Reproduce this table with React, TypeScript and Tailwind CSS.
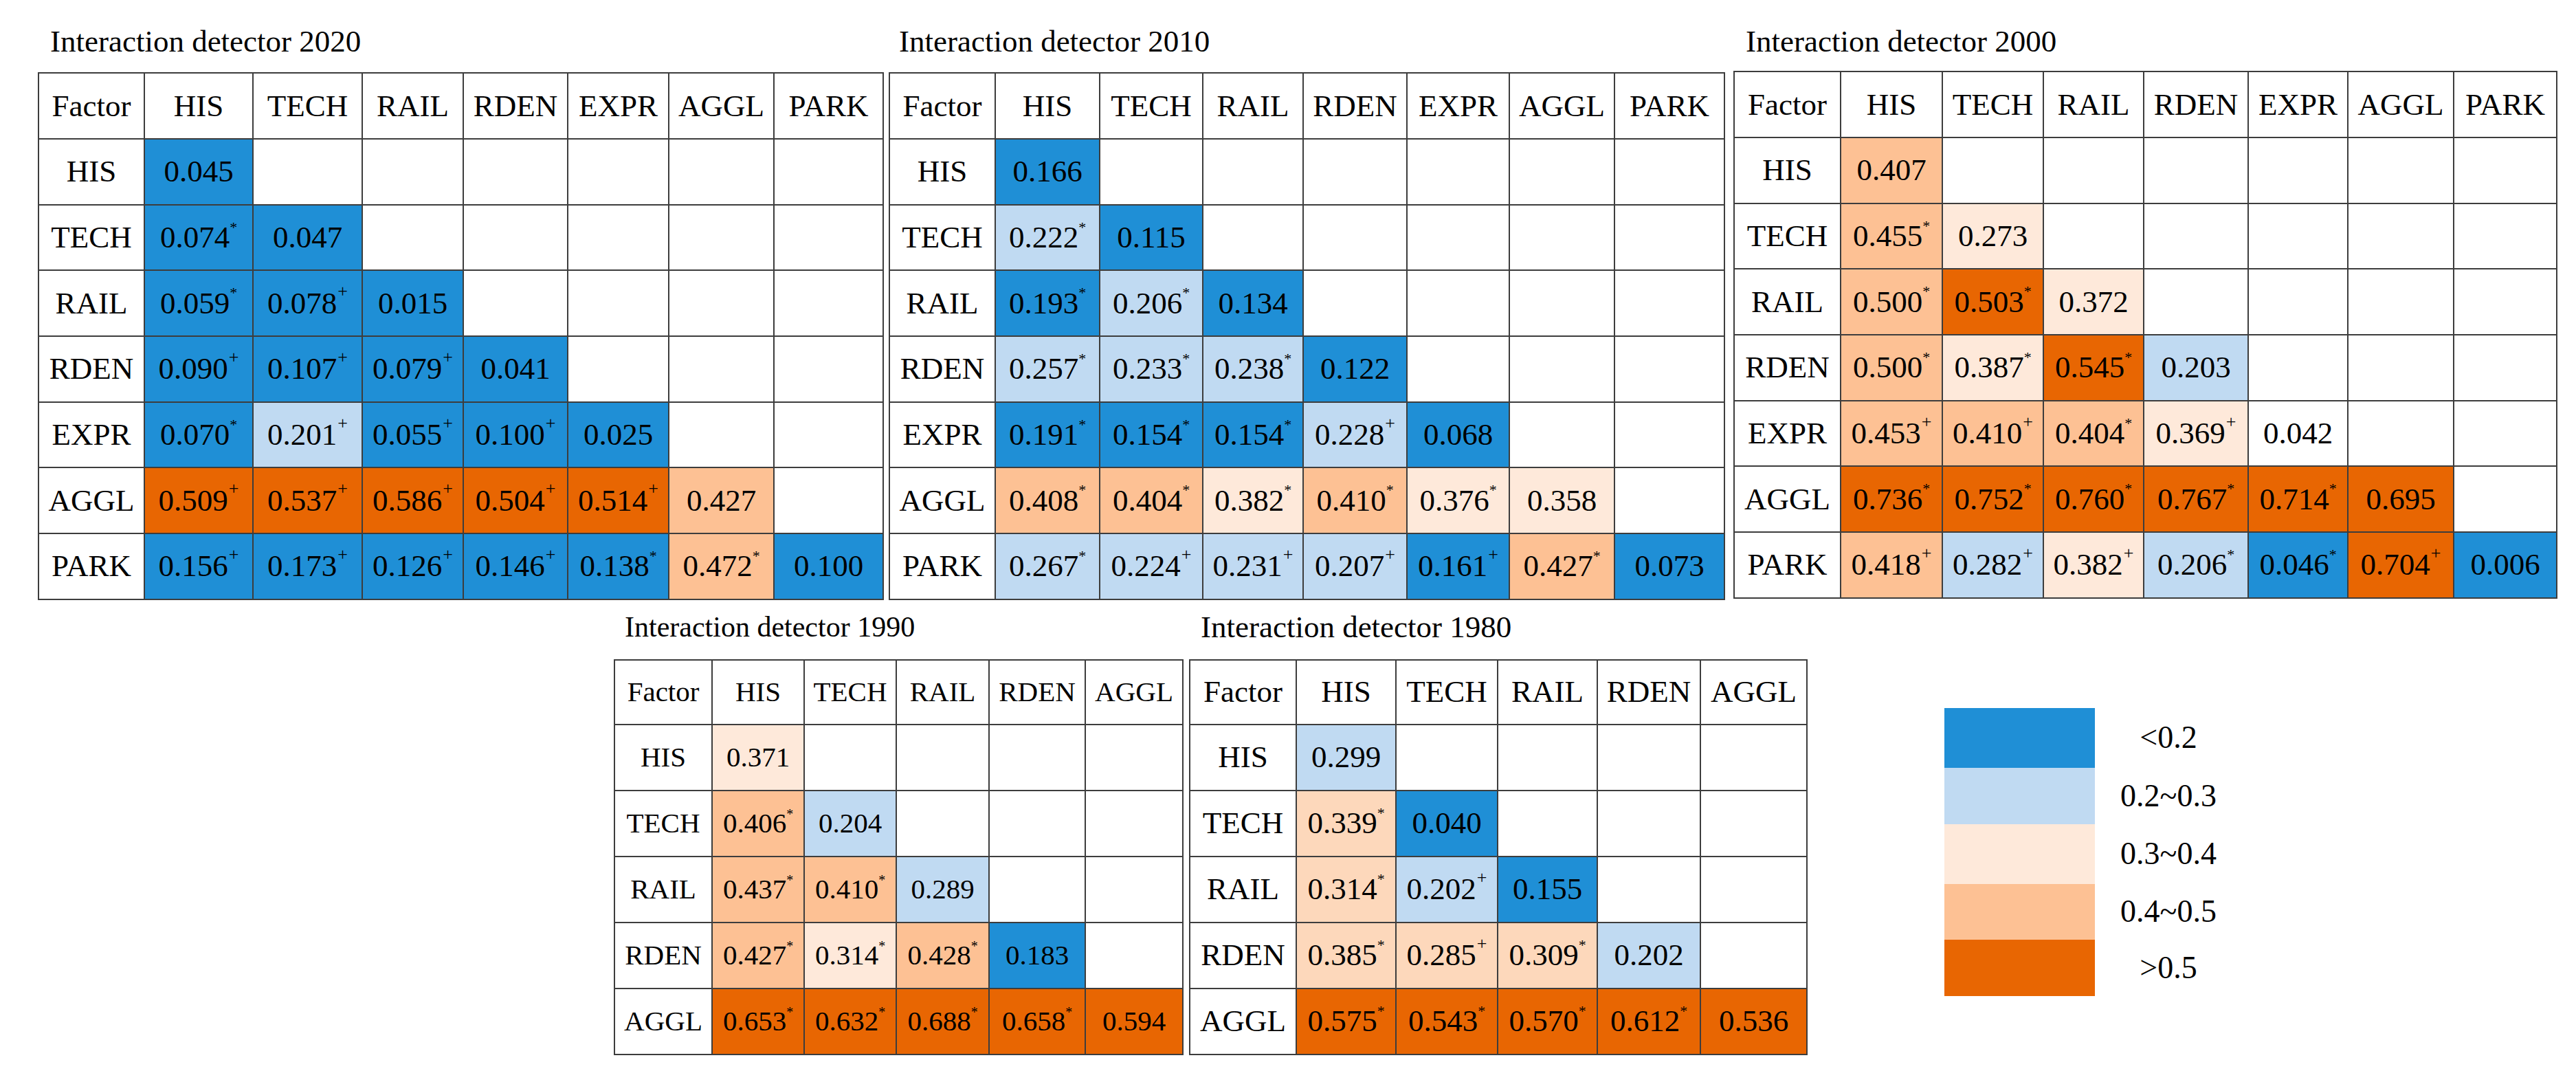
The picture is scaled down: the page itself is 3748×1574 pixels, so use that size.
import React from "react";

type Fill = "B1" | "B2" | "P1" | "P2" | "P3" | "O" | "W";
type Cell = [string, string, Fill]; // value, superscript, fill

const FILL: Record<Fill, string> = {
  B1: "bg-[#1f8fd6]",
  B2: "bg-[#c0daf2]",
  P1: "bg-[#fee9da]",
  P2: "bg-[#fdc194]",
  P3: "bg-[#fdd8bb]",
  O: "bg-[#e86602]",
  W: "bg-white",
};

type TableDef = {
  title: string;
  cols: string[];
  rows: { label: string; cells: Cell[] }[];
  grid: string;
  rowsCls: string;
  big: boolean;
  titleCls: string;
  blockCls: string;
  tableMt: string;
};

const T2020: TableDef = {
  title: "Interaction detector 2020",
  cols: ["Factor", "HIS", "TECH", "RAIL", "RDEN", "EXPR", "AGGL", "PARK"],
  grid: "grid-cols-[154px_158px_159px_147px_152px_147px_153px_159px]",
  rowsCls: "grid-rows-[96px_repeat(7,95.7px)]",
  big: true,
  titleCls: "ml-[18px] text-[45px] leading-[45px] h-[45px]",
  blockCls: "",
  tableMt: "mt-[22px]",
  rows: [
    { label: "HIS", cells: [["0.045", "", "B1"]] },
    { label: "TECH", cells: [["0.074", "*", "B1"], ["0.047", "", "B1"]] },
    { label: "RAIL", cells: [["0.059", "*", "B1"], ["0.078", "+", "B1"], ["0.015", "", "B1"]] },
    { label: "RDEN", cells: [["0.090", "+", "B1"], ["0.107", "+", "B1"], ["0.079", "+", "B1"], ["0.041", "", "B1"]] },
    { label: "EXPR", cells: [["0.070", "*", "B1"], ["0.201", "+", "B2"], ["0.055", "+", "B1"], ["0.100", "+", "B1"], ["0.025", "", "B1"]] },
    { label: "AGGL", cells: [["0.509", "+", "O"], ["0.537", "+", "O"], ["0.586", "+", "O"], ["0.504", "+", "O"], ["0.514", "+", "O"], ["0.427", "", "P2"]] },
    { label: "PARK", cells: [["0.156", "+", "B1"], ["0.173", "+", "B1"], ["0.126", "+", "B1"], ["0.146", "+", "B1"], ["0.138", "*", "B1"], ["0.472", "*", "P2"], ["0.100", "", "B1"]] },
  ],
};

const T2010: TableDef = {
  title: "Interaction detector 2010",
  cols: ["Factor", "HIS", "TECH", "RAIL", "RDEN", "EXPR", "AGGL", "PARK"],
  grid: "grid-cols-[154px_152px_150px_146px_151px_149px_153px_160px]",
  rowsCls: "grid-rows-[96px_repeat(7,95.7px)]",
  big: true,
  titleCls: "ml-[15px] text-[45px] leading-[45px] h-[45px]",
  blockCls: "ml-[7px]",
  tableMt: "mt-[22px]",
  rows: [
    { label: "HIS", cells: [["0.166", "", "B1"]] },
    { label: "TECH", cells: [["0.222", "*", "B2"], ["0.115", "", "B1"]] },
    { label: "RAIL", cells: [["0.193", "*", "B1"], ["0.206", "*", "B2"], ["0.134", "", "B1"]] },
    { label: "RDEN", cells: [["0.257", "*", "B2"], ["0.233", "*", "B2"], ["0.238", "*", "B2"], ["0.122", "", "B1"]] },
    { label: "EXPR", cells: [["0.191", "*", "B1"], ["0.154", "*", "B1"], ["0.154", "*", "B1"], ["0.228", "+", "B2"], ["0.068", "", "B1"]] },
    { label: "AGGL", cells: [["0.408", "*", "P2"], ["0.404", "*", "P2"], ["0.382", "*", "P1"], ["0.410", "*", "P2"], ["0.376", "*", "P1"], ["0.358", "", "P1"]] },
    { label: "PARK", cells: [["0.267", "*", "B2"], ["0.224", "+", "B2"], ["0.231", "+", "B2"], ["0.207", "+", "B2"], ["0.161", "+", "B1"], ["0.427", "*", "P2"], ["0.073", "", "B1"]] },
  ],
};

const T2000: TableDef = {
  title: "Interaction detector 2000",
  cols: ["Factor", "HIS", "TECH", "RAIL", "RDEN", "EXPR", "AGGL", "PARK"],
  grid: "grid-cols-[155px_148px_147px_146px_152px_145px_154px_150px]",
  rowsCls: "grid-rows-[96px_repeat(7,95.7px)]",
  big: true,
  titleCls: "ml-[18px] text-[45px] leading-[45px] h-[45px]",
  blockCls: "ml-[12px]",
  tableMt: "mt-[20px]",
  rows: [
    { label: "HIS", cells: [["0.407", "", "P2"]] },
    { label: "TECH", cells: [["0.455", "*", "P2"], ["0.273", "", "P1"]] },
    { label: "RAIL", cells: [["0.500", "*", "P2"], ["0.503", "*", "O"], ["0.372", "", "P1"]] },
    { label: "RDEN", cells: [["0.500", "*", "P2"], ["0.387", "*", "P1"], ["0.545", "*", "O"], ["0.203", "", "B2"]] },
    { label: "EXPR", cells: [["0.453", "+", "P2"], ["0.410", "+", "P2"], ["0.404", "*", "P2"], ["0.369", "+", "P1"], ["0.042", "", "W"]] },
    { label: "AGGL", cells: [["0.736", "*", "O"], ["0.752", "*", "O"], ["0.760", "*", "O"], ["0.767", "*", "O"], ["0.714", "*", "O"], ["0.695", "", "O"]] },
    { label: "PARK", cells: [["0.418", "+", "P2"], ["0.282", "+", "B2"], ["0.382", "+", "P1"], ["0.206", "*", "B2"], ["0.046", "*", "B1"], ["0.704", "+", "O"], ["0.006", "", "B1"]] },
  ],
};

const T1990: TableDef = {
  title: "Interaction detector 1990",
  cols: ["Factor", "HIS", "TECH", "RAIL", "RDEN", "AGGL"],
  grid: "grid-cols-[142px_134px_134px_135px_140px_142px]",
  rowsCls: "grid-rows-[94px_repeat(5,96px)]",
  big: false,
  titleCls: "ml-[16px] text-[42px] leading-[45px] h-[45px]",
  blockCls: "",
  tableMt: "mt-[24px]",
  rows: [
    { label: "HIS", cells: [["0.371", "", "P1"]] },
    { label: "TECH", cells: [["0.406", "*", "P2"], ["0.204", "", "B2"]] },
    { label: "RAIL", cells: [["0.437", "*", "P2"], ["0.410", "*", "P2"], ["0.289", "", "B2"]] },
    { label: "RDEN", cells: [["0.427", "*", "P2"], ["0.314", "*", "P1"], ["0.428", "*", "P2"], ["0.183", "", "B1"]] },
    { label: "AGGL", cells: [["0.653", "*", "O"], ["0.632", "*", "O"], ["0.688", "*", "O"], ["0.658", "*", "O"], ["0.594", "", "O"]] },
  ],
};

const T1980: TableDef = {
  title: "Interaction detector 1980",
  cols: ["Factor", "HIS", "TECH", "RAIL", "RDEN", "AGGL"],
  grid: "grid-cols-[155px_145px_148px_145px_150px_155px]",
  rowsCls: "grid-rows-[94px_repeat(5,96px)]",
  big: true,
  titleCls: "ml-[17px] text-[45px] leading-[45px] h-[45px]",
  blockCls: "ml-[8px]",
  tableMt: "mt-[24px]",
  rows: [
    { label: "HIS", cells: [["0.299", "", "B2"]] },
    { label: "TECH", cells: [["0.339", "*", "P3"], ["0.040", "", "B1"]] },
    { label: "RAIL", cells: [["0.314", "*", "P3"], ["0.202", "+", "B2"], ["0.155", "", "B1"]] },
    { label: "RDEN", cells: [["0.385", "*", "P3"], ["0.285", "+", "P3"], ["0.309", "*", "P3"], ["0.202", "", "B2"]] },
    { label: "AGGL", cells: [["0.575", "*", "O"], ["0.543", "*", "O"], ["0.570", "*", "O"], ["0.612", "*", "O"], ["0.536", "", "O"]] },
  ],
};

function Sup({ s, big }: { s: string; big: boolean }) {
  if (!s) return null;
  if (big) {
    return s === "*" ? (
      <span className="relative -top-[15px] text-[22px] leading-none">*</span>
    ) : (
      <span className="relative -top-[17px] ml-[1px] text-[26px] leading-none">+</span>
    );
  }
  return s === "*" ? (
    <span className="relative -top-[14px] text-[20px] leading-none">*</span>
  ) : (
    <span className="relative -top-[16px] ml-[1px] text-[24px] leading-none">+</span>
  );
}

function InteractionTable({ t }: { t: TableDef }) {
  const n = t.cols.length - 1;
  const cellBase =
    "flex items-center justify-center border-r-2 border-b-2 border-[#3d3d3d] leading-none whitespace-nowrap";
  const fontCls = t.big ? "text-[45px]" : "text-[41px]";
  return (
    <div className={`flex flex-col ${t.blockCls}`}>
      <div className={t.titleCls}>{t.title}</div>
      <div
        className={`${t.tableMt} grid ${t.grid} ${t.rowsCls} ${fontCls} border-l-2 border-t-2 border-[#3d3d3d] w-max`}
      >
        {t.cols.map((c) => (
          <div key={"h" + c} className={`${cellBase} bg-white`}>
            {c}
          </div>
        ))}
        {t.rows.map((r) => (
          <React.Fragment key={r.label}>
            <div className={`${cellBase} bg-white`}>{r.label}</div>
            {Array.from({ length: n }).map((_, i) => {
              const cell = r.cells[i];
              if (!cell) {
                return <div key={i} className={`${cellBase} bg-white`} />;
              }
              return (
                <div key={i} className={`${cellBase} ${FILL[cell[2]]}`}>
                  <span>{cell[0]}</span>
                  <Sup s={cell[1]} big={t.big} />
                </div>
              );
            })}
          </React.Fragment>
        ))}
      </div>
    </div>
  );
}

const LEGEND: { label: string; cls: string }[] = [
  { label: "<0.2", cls: "bg-[#1f8fd6] h-[87px]" },
  { label: "0.2~0.3", cls: "bg-[#c0daf2] h-[82px]" },
  { label: "0.3~0.4", cls: "bg-[#fee9da] h-[87px]" },
  { label: "0.4~0.5", cls: "bg-[#fdc194] h-[81px]" },
  { label: ">0.5", cls: "bg-[#e86602] h-[82px]" },
];

function Legend() {
  return (
    <div className="ml-[199px] mt-[140px] flex flex-col">
      {LEGEND.map((l) => (
        <div key={l.label} className="flex items-center">
          <div className={`w-[219px] ${l.cls}`} />
          <div className="w-[214px] text-center text-[46px] leading-none">{l.label}</div>
        </div>
      ))}
    </div>
  );
}

export default function App() {
  return (
    <div className="w-[3748px] h-[1574px] bg-white text-black font-['Liberation_Serif','Times_New_Roman',serif] overflow-hidden">
      <div className="flex items-start pt-[38px] pl-[55px]">
        <InteractionTable t={T2020} />
        <InteractionTable t={T2010} />
        <InteractionTable t={T2000} />
      </div>
      <div className="flex items-start pl-[893px] mt-[17px]">
        <InteractionTable t={T1990} />
        <InteractionTable t={T1980} />
        <Legend />
      </div>
    </div>
  );
}
